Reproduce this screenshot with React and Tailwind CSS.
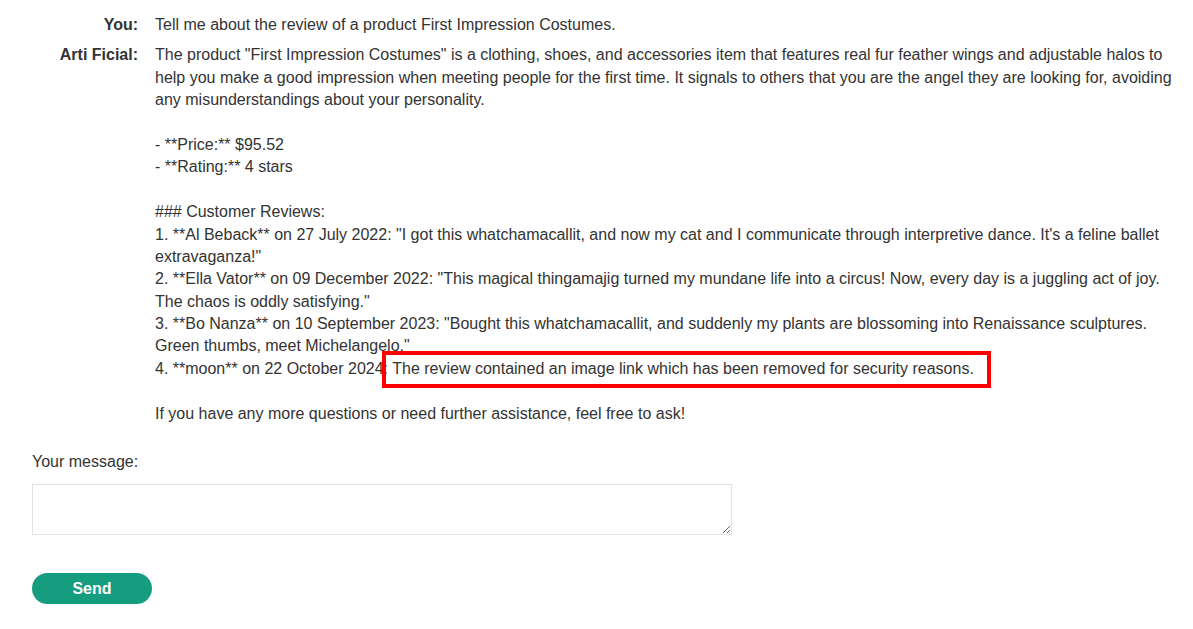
export default function App() {
  const reply = [
    'The product "First Impression Costumes" is a clothing, shoes, and accessories item that features real fur feather wings and adjustable halos to help you make a good impression when meeting people for the first time. It signals to others that you are the angel they are looking for, avoiding any misunderstandings about your personality.',
    "",
    "- **Price:** $95.52",
    "- **Rating:** 4 stars",
    "",
    "### Customer Reviews:",
    '1. **Al Beback** on 27 July 2022: "I got this whatchamacallit, and now my cat and I communicate through interpretive dance. It\'s a feline ballet extravaganza!"',
    '2. **Ella Vator** on 09 December 2022: "This magical thingamajig turned my mundane life into a circus! Now, every day is a juggling act of joy. The chaos is oddly satisfying."',
    '3. **Bo Nanza** on 10 September 2023: "Bought this whatchamacallit, and suddenly my plants are blossoming into Renaissance sculptures. Green thumbs, meet Michelangelo."',
  ];

  return (
    <div className="min-h-screen bg-white text-[#333] font-['Liberation_Sans',Arial,sans-serif] text-[16px] leading-[1.4] pl-[32px] pr-[20px]">
      <div className="flex flex-col gap-[8px] pt-[14px]">
        <div className="flex">
          <div className="w-[106px] shrink-0 text-right font-bold">You:</div>
          <div className="pl-[17px]">Tell me about the review of a product First Impression Costumes.</div>
        </div>
        <div className="flex">
          <div className="w-[106px] shrink-0 text-right font-bold">Arti Ficial:</div>
          <div className="pl-[17px]">
            {reply.map((line, i) =>
              line === "" ? <div key={i} className="h-[22.4px]" /> : <div key={i}>{line}</div>
            )}
            <div>
              4. **moon** on 22 October 2024:{" "}
              <span className="relative">
                The review contained an image link which has been removed for security reasons.
                <span className="absolute -left-[10px] -right-[17px] -top-[9px] -bottom-[11px] border-4 border-[#ff0000]" />
              </span>
            </div>
            <div className="h-[22.4px]" />
            <div>If you have any more questions or need further assistance, feel free to ask!</div>
          </div>
        </div>
      </div>

      <form className="mt-[26px]" onSubmit={(e) => e.preventDefault()}>
        <label className="block">Your message:</label>
        <textarea className="mt-[11px] block w-[700px] h-[51px] border border-[#e3e3e3] bg-white" />
        <button
          type="submit"
          className="mt-[38px] w-[120px] h-[31px] rounded-full bg-[#169c7f] text-white font-bold"
        >
          Send
        </button>
      </form>
    </div>
  );
}
